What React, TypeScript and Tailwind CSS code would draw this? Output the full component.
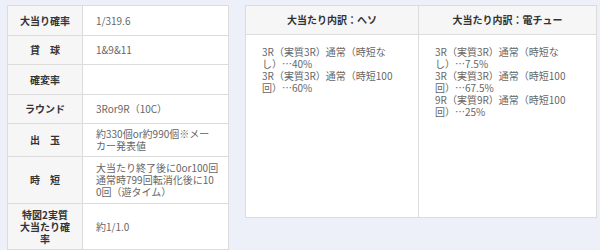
const jp = "font-['Noto_Sans_CJK_JP','Noto_Sans',sans-serif]";

type Spec = { label: string[]; value: string[]; h: string };

const specs: Spec[] = [
  { label: ['大当り確率'], value: ['1/319.6'], h: 'h-[29px]' },
  { label: ['貸　球'], value: ['1&9&11'], h: 'h-[29px]' },
  { label: ['確変率'], value: [], h: 'h-[30px]' },
  { label: ['ラウンド'], value: ['3Ror9R（10C）'], h: 'h-[29px]' },
  { label: ['出　玉'], value: ['約330個or約990個※メー', 'カー発表値'], h: 'h-[33px]' },
  {
    label: ['時　短'],
    value: ['大当たり終了後に0or100回', '通常時799回転消化後に10', '0回（遊タイム）'],
    h: 'h-[47px]',
  },
  { label: ['特図2実質', '大当たり確', '率'], value: ['約1/1.0'], h: 'h-[46px]' },
];

const breakdown = [
  {
    title: '大当たり内訳：ヘソ',
    items: [
      ['3R（実質3R）通常（時短な', 'し）…40%'],
      ['3R（実質3R）通常（時短100', '回）…60%'],
    ],
  },
  {
    title: '大当たり内訳：電チュー',
    items: [
      ['3R（実質3R）通常（時短な', 'し）…7.5%'],
      ['3R（実質3R）通常（時短100', '回）…67.5%'],
      ['9R（実質9R）通常（時短100', '回）…25%'],
    ],
  },
];

const SpecTable = () => (
  <div className="w-[222px] shrink-0 border border-[#dcdcdc] bg-white">
    {specs.map((row, i) => (
      <div key={i} className={`flex ${row.h} ${i > 0 ? 'border-t border-[#dcdcdc]' : ''}`}>
        <div className="flex w-[75px] shrink-0 flex-col items-center justify-center border-r border-[#dcdcdc] bg-[#f6f6f6] text-center font-bold text-[#333]">
          {row.label.map((l) => (
            <span key={l} className="whitespace-pre">{l}</span>
          ))}
        </div>
        <div className="flex flex-1 flex-col justify-center pl-[13px] text-[#666]">
          {row.value.map((v) => (
            <span key={v} className="whitespace-nowrap">{v}</span>
          ))}
        </div>
      </div>
    ))}
  </div>
);

const BreakdownTable = () => (
  <div className="grid h-[213px] w-[352px] grid-cols-[173px_1fr] grid-rows-[29px_1fr] border border-[#dcdcdc] bg-white">
    {breakdown.map((col, i) => (
      <div
        key={col.title}
        className={`flex items-center justify-center border-b border-[#dcdcdc] bg-[#f6f6f6] font-bold text-[#333] ${i === 0 ? 'border-r' : ''}`}
      >
        {col.title}
      </div>
    ))}
    {breakdown.map((col, i) => (
      <div key={col.title} className={`pl-[16px] pt-[11px] text-[#666] ${i === 0 ? 'border-r border-[#dcdcdc]' : ''}`}>
        {col.items.map((item, j) => (
          <div key={j}>
            {item.map((line) => (
              <span key={line} className="block whitespace-nowrap">{line}</span>
            ))}
          </div>
        ))}
      </div>
    ))}
  </div>
);

export default function App() {
  return (
    <div className={`h-[250px] w-[600px] bg-[#edf0f9] pl-[7px] pt-[5px] text-[10px] leading-[12px] ${jp}`}>
      <div className="flex items-start gap-[16px]">
        <SpecTable />
        <BreakdownTable />
      </div>
    </div>
  );
}
